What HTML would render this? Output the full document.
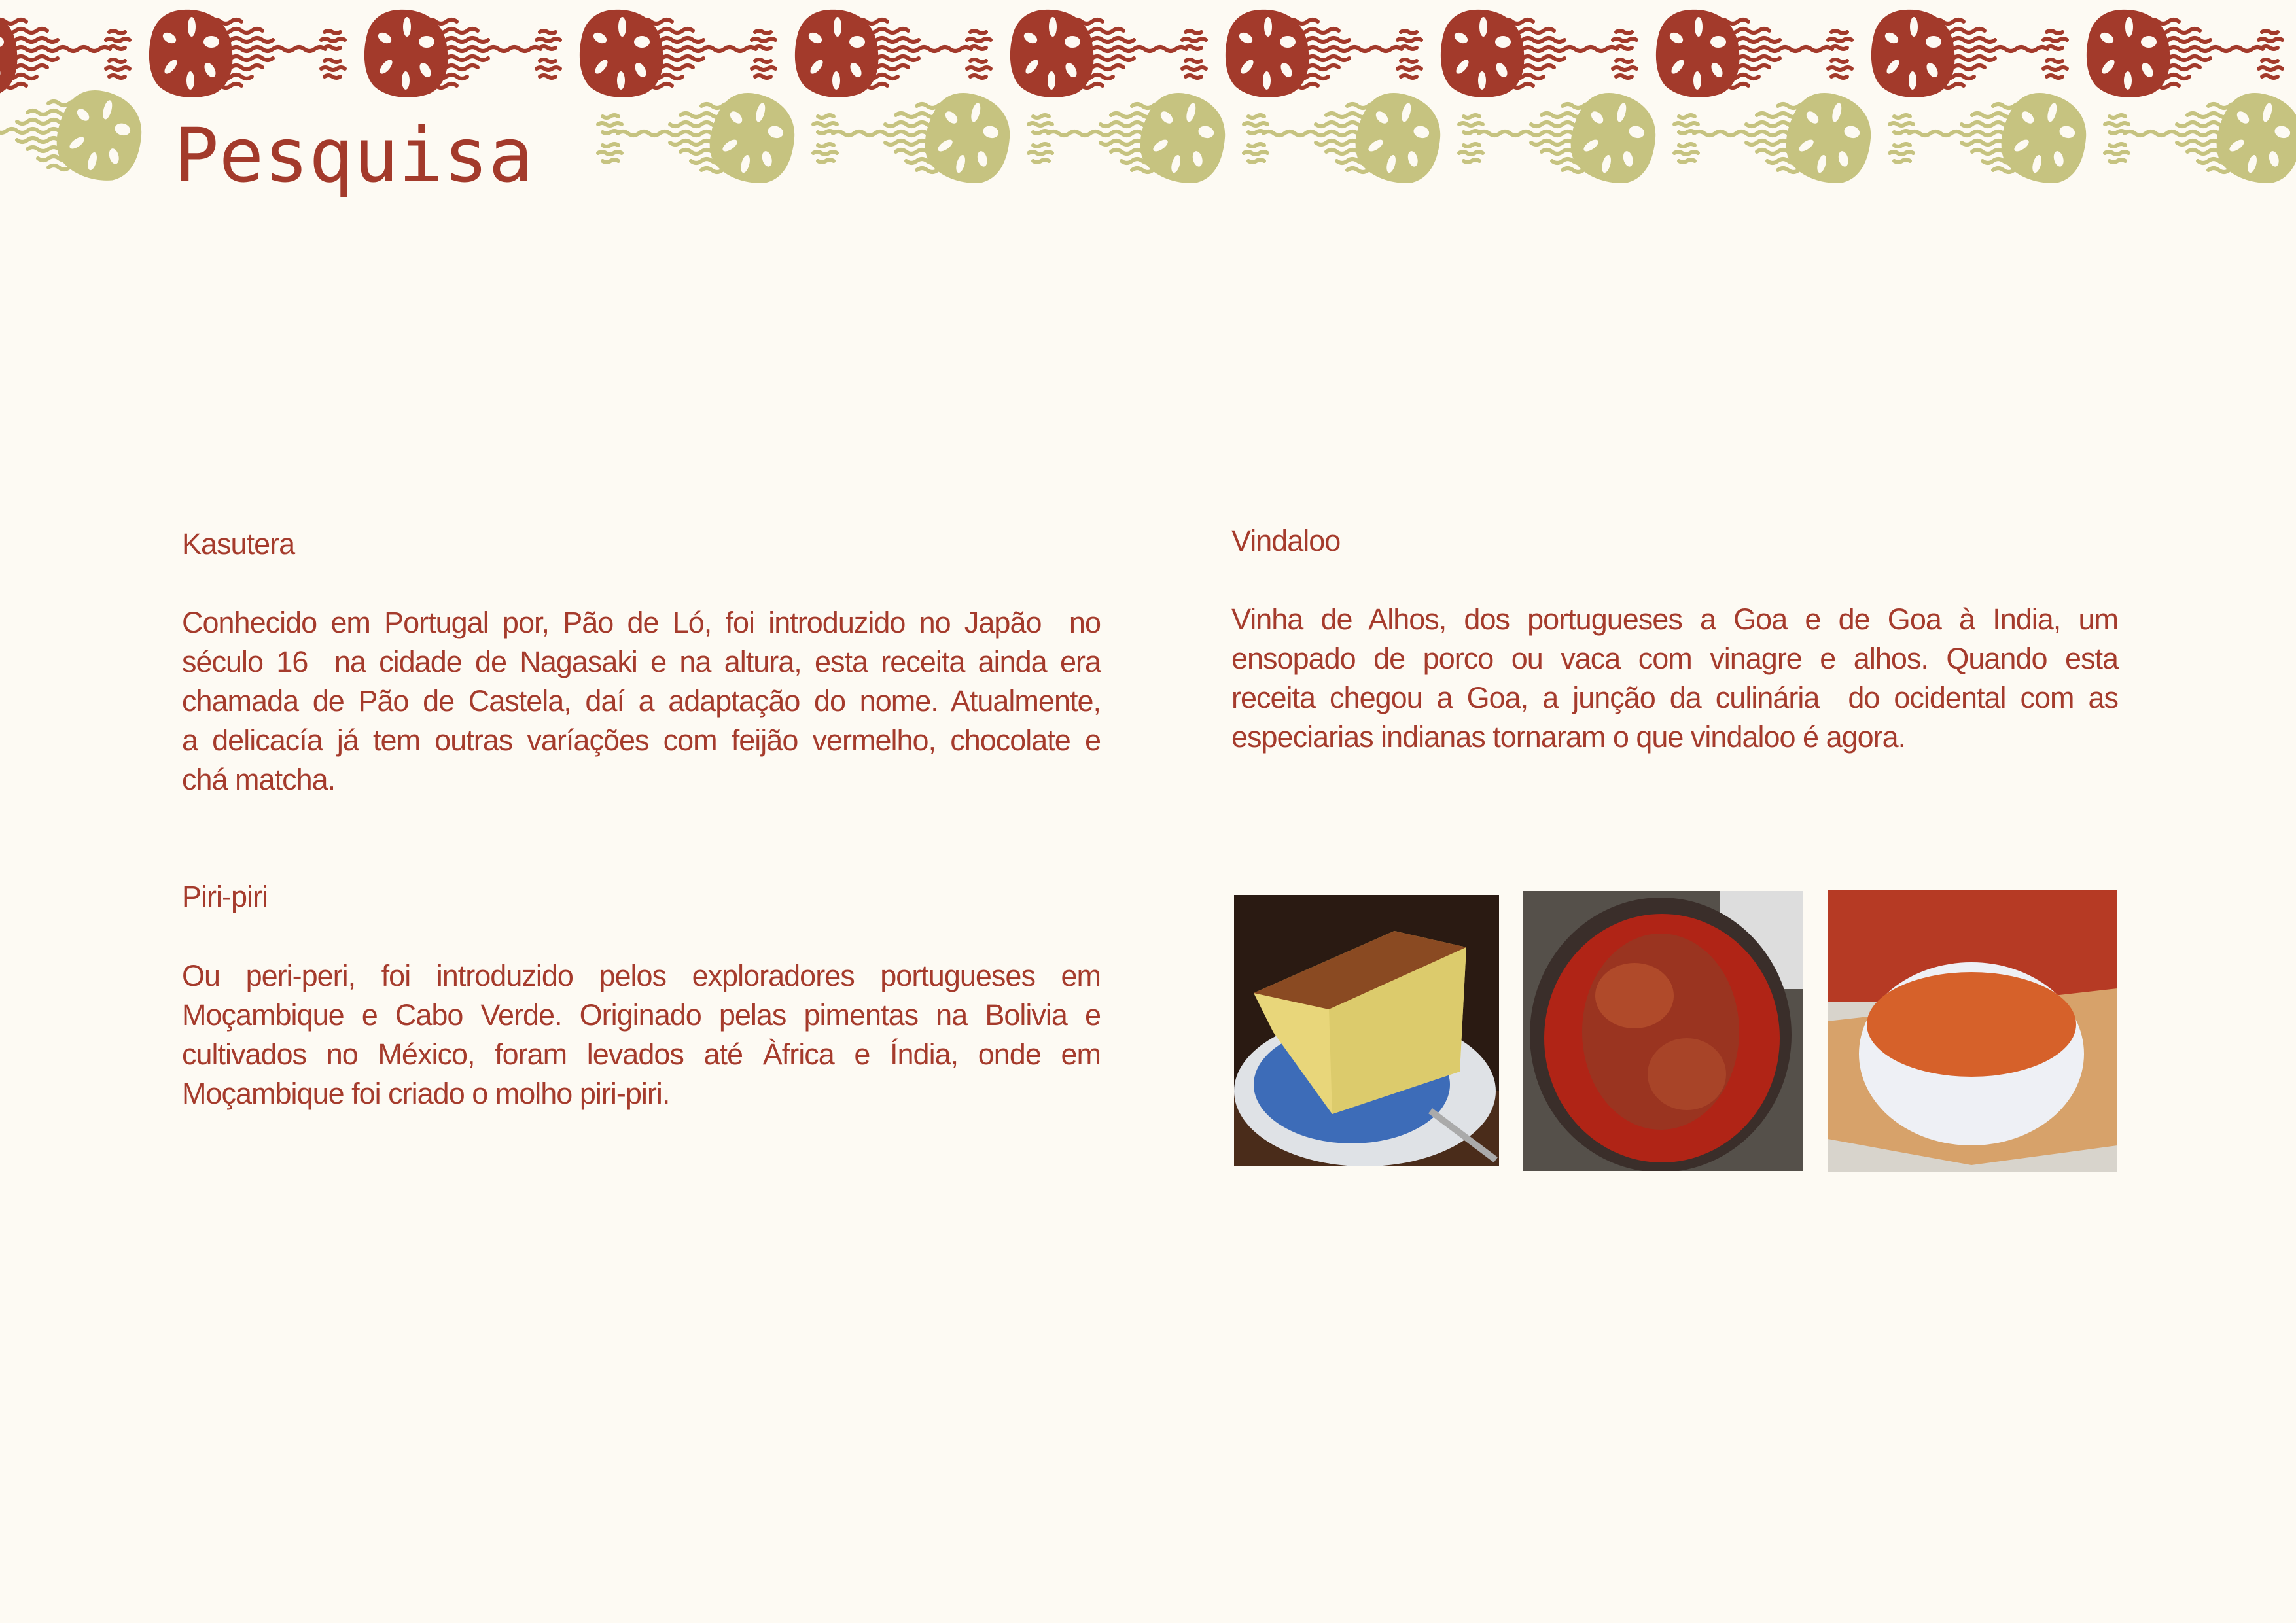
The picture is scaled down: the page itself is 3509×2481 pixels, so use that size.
<!DOCTYPE html>
<html><head><meta charset="utf-8"><style>
html,body{margin:0;padding:0}
body{width:3509px;height:2481px;background:#fdfaf3;position:relative;overflow:hidden;font-family:"Liberation Sans",sans-serif;color:#a53b2c}
.t{position:absolute;font-size:45px;letter-spacing:-1px;margin:0;line-height:60px}
.p{position:absolute;font-size:45px;letter-spacing:-1px;line-height:60px;margin:0}
.p span{display:block;text-align:justify;text-align-last:justify;white-space:nowrap}
.p span.l{text-align-last:left}
h1{position:absolute;left:266px;top:168px;margin:0;font-family:"DejaVu Sans Mono","Liberation Mono",monospace;font-weight:normal;font-size:114px;line-height:140px;color:#a33a2b}
.img{position:absolute}
</style></head><body>
<svg width="3509" height="300" style="position:absolute;left:0;top:0">
<defs>
<g id="waves" fill="none" stroke-width="6" stroke-linecap="round">
<path d="M30 -48 q8 -6 16 0 t16 0 t16 0"/>
<path d="M30 -34 q8 -6 16 0 t16 0 t16 0 t16 0 t16 0"/>
<path d="M30 -20 q8 -6 16 0 t16 0 t16 0 t16 0 t16 0 t16 0"/>
<path d="M30 -6 q8 -6 16 0 t16 0 t16 0 t16 0 t16 0 t16 0 t16 0 t16 0 t16 0 t16 0 t16 0"/>
<path d="M30 8 q8 -6 16 0 t16 0 t16 0 t16 0 t16 0 t16 0"/>
<path d="M30 22 q8 -6 16 0 t16 0 t16 0 t16 0 t16 0"/>
<path d="M30 36 q8 -6 16 0 t16 0 t16 0 t16 0"/>
<path d="M30 50 q8 -6 16 0 t16 0 t16 0"/>
<path d="M205 -32 q6 -4 12 0 t12 0"/>
<path d="M200 -20 q6 -4 12 0 t12 0 t12 0"/>
<path d="M205 -8 q6 -4 12 0 t12 0"/>
<path d="M205 12 q6 -4 12 0 t12 0"/>
<path d="M200 24 q6 -4 12 0 t12 0 t12 0"/>
<path d="M205 36 q6 -4 12 0 t12 0"/>
</g>
<g id="lotus">
<path d="M-10 -66 C28 -68 56 -48 62 -16 C68 16 64 48 37 62 C10 72 -27 70 -48 51 C-66 32 -66 -5 -58 -32 C-50 -55 -32 -65 -10 -66Z"/>
<g fill="#fdfaf3">
<ellipse cx="2" cy="-40" rx="6" ry="15"/>
<ellipse cx="32" cy="-17" rx="12" ry="9"/>
<ellipse cx="30" cy="26" rx="7" ry="12" transform="rotate(-30 30 26)"/>
<ellipse cx="0" cy="42" rx="6" ry="14"/>
<ellipse cx="-30" cy="21" rx="6" ry="13" transform="rotate(40 -30 21)"/>
<ellipse cx="-32" cy="-23" rx="11" ry="7" transform="rotate(30 -32 -23)"/>
</g>
</g>
<g id="red"><g stroke="#a33a2b"><use href="#waves"/></g><g fill="#a33a2b"><use href="#lotus"/></g></g>
<g id="green"><g transform="scale(-1,1)" stroke="#c6c380"><use href="#waves"/></g><g fill="#c6c380" transform="rotate(15)"><use href="#lotus"/></g></g>
</defs>
<g transform="translate(-38,81)"><use href="#red"/></g>
<g transform="translate(291,81)"><use href="#red"/></g>
<g transform="translate(620,81)"><use href="#red"/></g>
<g transform="translate(949,81)"><use href="#red"/></g>
<g transform="translate(1278,81)"><use href="#red"/></g>
<g transform="translate(1607,81)"><use href="#red"/></g>
<g transform="translate(1936,81)"><use href="#red"/></g>
<g transform="translate(2265,81)"><use href="#red"/></g>
<g transform="translate(2594,81)"><use href="#red"/></g>
<g transform="translate(2923,81)"><use href="#red"/></g>
<g transform="translate(3252,81)"><use href="#red"/></g>
<g transform="translate(152,206)"><use href="#green"/></g>
<g transform="translate(1150,210)"><use href="#green"/></g>
<g transform="translate(1479,210)"><use href="#green"/></g>
<g transform="translate(1808,210)"><use href="#green"/></g>
<g transform="translate(2137,210)"><use href="#green"/></g>
<g transform="translate(2466,210)"><use href="#green"/></g>
<g transform="translate(2795,210)"><use href="#green"/></g>
<g transform="translate(3124,210)"><use href="#green"/></g>
<g transform="translate(3453,210)"><use href="#green"/></g>
</svg>
<h1>Pesquisa</h1>

<div class="t" style="left:278px;top:802px">Kasutera</div>
<div class="p" style="left:278px;top:922px;width:1404px">
<span>Conhecido em Portugal por, Pão de Ló, foi introduzido no Japão&nbsp; no</span>
<span>século 16&nbsp; na cidade de Nagasaki e na altura, esta receita ainda era</span>
<span>chamada de Pão de Castela, daí a adaptação do nome. Atualmente,</span>
<span>a delicacía já tem outras varíações com feijão vermelho, chocolate e</span>
<span class="l">chá matcha.</span></div>

<div class="t" style="left:278px;top:1341px">Piri-piri</div>
<div class="p" style="left:278px;top:1462px;width:1404px">
<span>Ou peri-peri, foi introduzido pelos exploradores portugueses em</span>
<span>Moçambique e Cabo Verde. Originado pelas pimentas na Bolivia e</span>
<span>cultivados no México, foram levados até Àfrica e Índia, onde em</span>
<span class="l">Moçambique foi criado o molho piri-piri.</span></div>

<div class="t" style="left:1882px;top:797px">Vindaloo</div>
<div class="p" style="left:1882px;top:917px;width:1355px">
<span>Vinha de Alhos, dos portugueses a Goa e de Goa à India, um</span>
<span>ensopado de porco ou vaca com vinagre e alhos. Quando esta</span>
<span>receita chegou a Goa, a junção da culinária&nbsp; do ocidental com as</span>
<span class="l">especiarias indianas tornaram o que vindaloo é agora.</span></div>

<svg class="img" style="left:1886px;top:1368px" width="405" height="415" viewBox="0 0 405 415">
<rect width="405" height="415" fill="#2a1a12"/>
<rect y="300" width="405" height="115" fill="#4a2c1a"/>
<ellipse cx="200" cy="300" rx="200" ry="115" fill="#dfe2e6"/>
<ellipse cx="180" cy="290" rx="150" ry="90" fill="#3d6cb8"/>
<polygon points="30,150 245,55 355,80 345,270 150,335 60,210" fill="#e8d67a"/>
<polygon points="30,150 245,55 355,80 145,175" fill="#8a4a22"/>
<polygon points="145,175 355,80 345,270 150,335" fill="#dccb6c"/>
<path d="M300 330 L400 405" stroke="#aaa" stroke-width="10"/>
</svg>
<svg class="img" style="left:2328px;top:1362px" width="427" height="428" viewBox="0 0 427 428">
<rect width="427" height="428" fill="#55504a"/>
<rect x="300" y="0" width="127" height="150" fill="#ddd"/>
<ellipse cx="210" cy="220" rx="200" ry="210" fill="#3a2e2a"/>
<ellipse cx="212" cy="225" rx="180" ry="190" fill="#b02416"/>
<ellipse cx="210" cy="215" rx="120" ry="150" fill="#9a3420"/>
<ellipse cx="170" cy="160" rx="60" ry="50" fill="#b04a2a"/>
<ellipse cx="250" cy="280" rx="60" ry="55" fill="#a84428"/>
</svg>
<svg class="img" style="left:2793px;top:1361px" width="443" height="430" viewBox="0 0 443 430">
<rect width="443" height="430" fill="#d8d4cc"/>
<rect width="443" height="170" fill="#b63a24"/>
<path d="M0 200 L443 150 L443 390 L220 420 L0 380Z" fill="#d7a26a"/>
<ellipse cx="220" cy="250" rx="172" ry="140" fill="#eef0f5"/>
<ellipse cx="220" cy="205" rx="160" ry="80" fill="#d6612a"/>
</svg>
</body></html>
